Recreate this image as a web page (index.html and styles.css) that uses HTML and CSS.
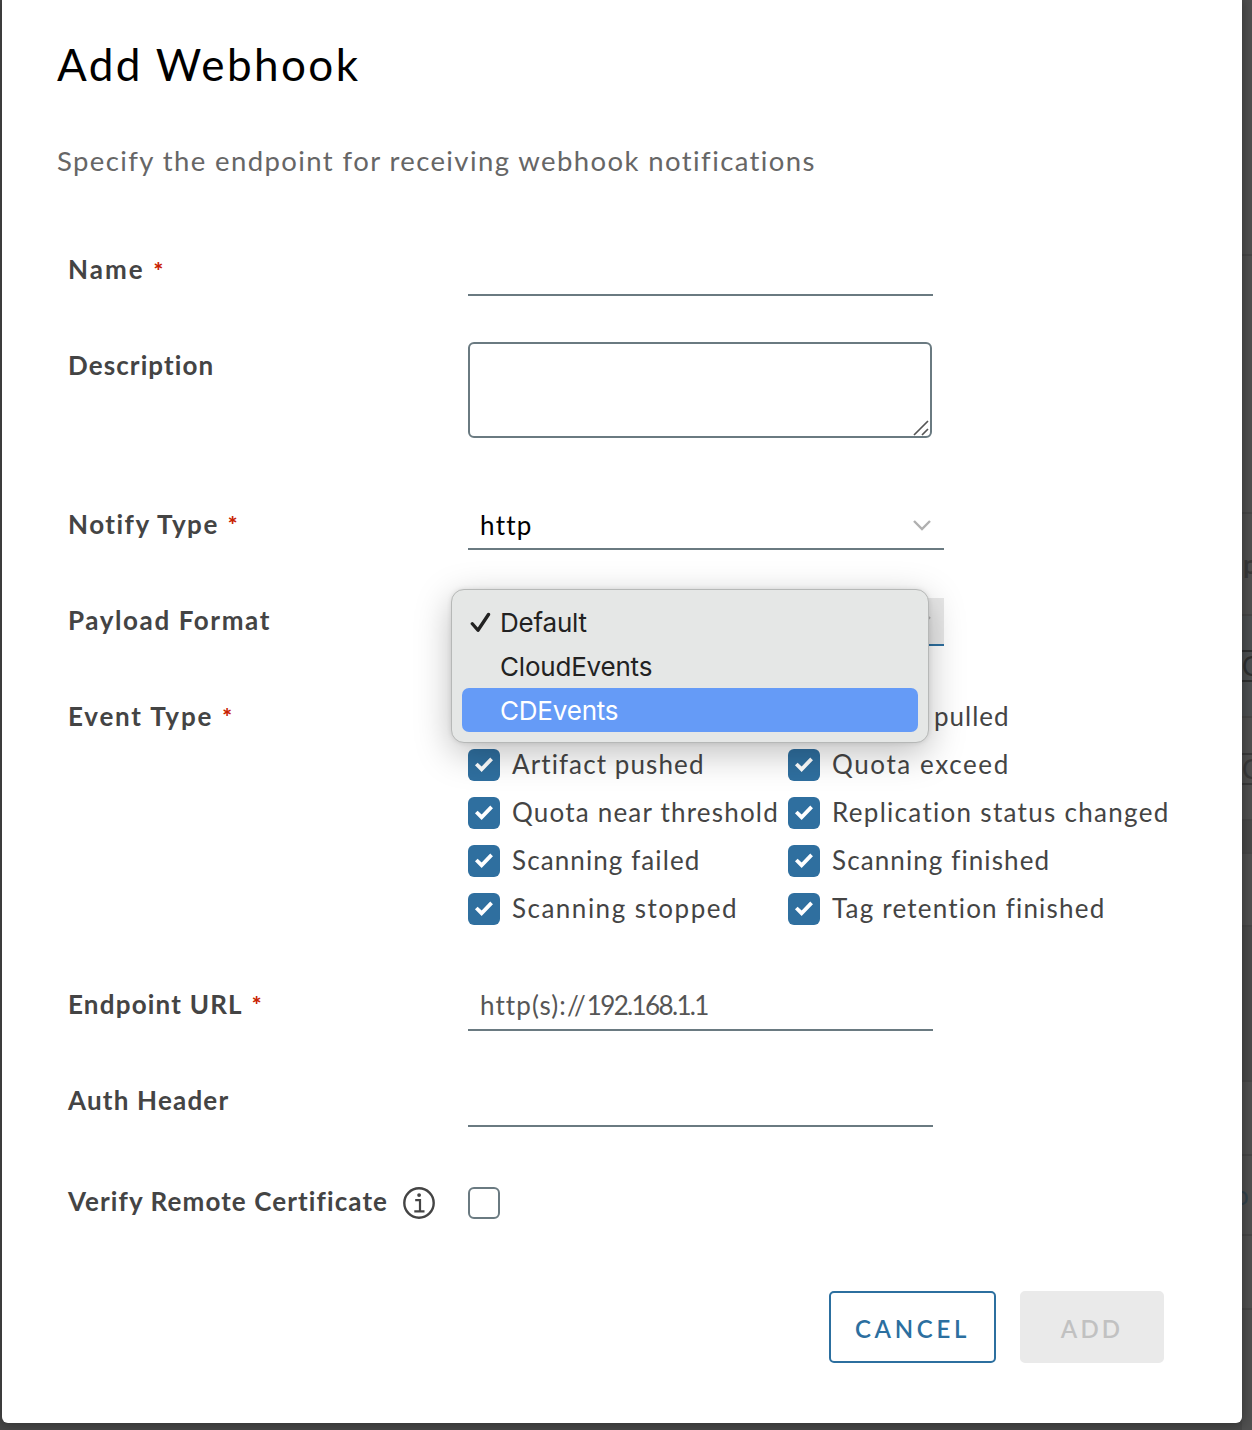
FILE: index.html
```html
<!DOCTYPE html>
<html lang="en">
<head>
<meta charset="utf-8">
<title>Add Webhook</title>
<link rel="stylesheet" href="styles.css">
</head>
<body>
<svg class="defs" aria-hidden="true">
  <symbol id="tick" viewBox="0 0 32 32"><path d="M8.3 15 13.6 20.2 23.6 9.9" fill="none" stroke="#fff" stroke-width="3.8"/></symbol>
  <symbol id="chevron" viewBox="0 0 20 12"><path d="M2 2 10 10 18 2" fill="none" stroke="#b0b0b0" stroke-width="2.4"/></symbol>
</svg>
<div class="backdrop">
  <main class="modal">
    <h1 class="title">Add Webhook</h1>
    <p class="subtitle">Specify the endpoint for receiving webhook notifications</p>
    <form class="form">
      <div class="row">
        <label class="label"><span class="track-20">Name</span><b class="req">*</b></label>
        <div class="field"></div>
      </div>
      <div class="row row-area">
        <label class="label"><span class="track-11">Description</span></label>
        <div class="area">
          <svg class="grip" viewBox="0 0 16 16"><path d="M1 15 15 1M9 15 15 9" stroke="#555" stroke-width="1.7" fill="none"/></svg>
        </div>
      </div>
      <div class="row">
        <label class="label mid"><span class="track-15">Notify Type</span><b class="req">*</b></label>
        <div class="field select"><span class="track-13">http</span><svg class="chev"><use href="#chevron"/></svg></div>
      </div>
      <div class="row">
        <label class="label mid"><span class="track-16">Payload Format</span></label>
        <div class="field select active">
          <svg class="chev"><use href="#chevron"/></svg>
          <div class="menu">
            <div class="option"><svg class="mark" viewBox="0 0 20 20"><path d="M2.2 11.2 7.6 17.4 17.6 2.4" fill="none" stroke="#222" stroke-width="3.2" stroke-linecap="round" stroke-linejoin="round"/></svg><span class="track-n">Default</span></div>
            <div class="option"><span class="track-n">CloudEvents</span></div>
            <div class="option chosen"><span class="track-n">CDEvents</span></div>
          </div>
        </div>
      </div>
      <div class="row row-events">
        <label class="label mid"><span class="track-18">Event Type</span><b class="req">*</b></label>
        <div class="events">
          <label class="check second"><svg class="box"><use href="#tick"/></svg><span class="track-10">Artifact pulled</span></label>
          <label class="check"><svg class="box"><use href="#tick"/></svg><span class="track-11">Artifact pushed</span></label>
          <label class="check"><svg class="box"><use href="#tick"/></svg><span class="track-16">Quota exceed</span></label>
          <label class="check"><svg class="box"><use href="#tick"/></svg><span class="track-12">Quota near threshold</span></label>
          <label class="check"><svg class="box"><use href="#tick"/></svg><span class="track-13">Replication status changed</span></label>
          <label class="check"><svg class="box"><use href="#tick"/></svg><span class="track-11">Scanning failed</span></label>
          <label class="check"><svg class="box"><use href="#tick"/></svg><span class="track-11">Scanning finished</span></label>
          <label class="check"><svg class="box"><use href="#tick"/></svg><span class="track-15">Scanning stopped</span></label>
          <label class="check"><svg class="box"><use href="#tick"/></svg><span class="track-12">Tag retention finished</span></label>
        </div>
      </div>
      <div class="row">
        <label class="label mid"><span class="track-12">Endpoint URL</span><b class="req">*</b></label>
        <div class="field tall hint"><span class="track-11">http(s)://</span><span class="digits">192.168.1.1</span></div>
      </div>
      <div class="row row-auth">
        <label class="label mid"><span class="track-12">Auth Header</span></label>
        <div class="field tall"></div>
      </div>
      <div class="row">
        <label class="label low"><span class="track-11">Verify Remote Certificate</span>
          <svg class="info" viewBox="0 0 32 32" fill="none" stroke="#444" stroke-width="2.4"><circle cx="16" cy="16" r="14.7"/><path d="M12.2 13.2H17V24M11.3 24.4H21.5" stroke-width="2.2"/><circle cx="16.1" cy="8.1" r="1.9" fill="#444" stroke="none"/></svg>
        </label>
        <div class="empty-box"></div>
      </div>
    </form>
    <div class="actions">
      <button class="btn cancel">CANCEL</button>
      <button class="btn add" disabled>ADD</button>
    </div>
  </main>
  <aside class="behind">
    <div class="strip h256"></div>
    <div class="strip h258"></div>
    <div class="strip h102"><span class="bold">p</span></div>
    <div class="strip h102 tint"><span class="boxed">C</span></div>
    <div class="strip h103"><span class="boxed faint">C</span></div>
    <div class="strip h33 band"></div>
    <div class="strip h73"></div>
    <div class="strip h155 deep"></div>
    <div class="strip h74"></div>
    <div class="strip h80"><span class="link">o</span></div>
    <div class="strip h74"></div>
  </aside>
</div>
</body>
</html>
```
FILE: styles.css
```css
* { box-sizing: border-box; }
body {
  margin: 0;
  background: #484848;
  font-family: Lato, "Open Sans", sans-serif;
  font-size: 26px;
  color: #444;
}
.defs { display: none; }
.backdrop {
  display: grid;
  grid-template-columns: 1240px 10px;
  height: 1430px;
  padding-left: 2px;
  overflow: hidden;
}
.modal {
  z-index: 1;
  height: 1423px;
  padding: 34px 0 0 55px;
  background: #fff;
  border-radius: 0 0 6px 6px;
  box-shadow: 0 0 12px 2px rgba(0, 0, 0, .3);
}
.title {
  margin: 0;
  font-size: 44px;
  font-weight: 400;
  line-height: 60px;
  letter-spacing: 2.4px;
  color: #000;
}
.subtitle {
  margin: 47px 0 0;
  font-size: 27.5px;
  line-height: 40px;
  letter-spacing: 1.4px;
  color: #666;
}
.form { padding: 67px 0 0 11px; }
.row { display: grid; grid-template-columns: 400px 1fr; height: 96px; align-items: start; }
.row-area { height: 158px; }
.row-events { height: 288px; }
.row-auth { height: 100px; }
.label { display: flex; align-items: center; height: 42px; font-weight: 700; line-height: 42px; white-space: nowrap; }
.mid { height: 43px; }
.low { height: 45px; }
.req { margin: 1px 0 0 9px; font-size: 23px; color: #c92100; }
.field {
  display: flex;
  align-items: center;
  width: 465px;
  height: 48px;
  padding-left: 12px;
  border-bottom: 2px solid #6a7a81;
}
.tall { height: 49px; padding-bottom: 2px; }
.select { position: relative; width: 476px; justify-content: space-between; color: #000; }
.active { justify-content: flex-end; background: #e8e8e8; border-color: #2d6f9f; }
.hint { color: #565656; }
.digits { letter-spacing: -1.65px; }
.chev { width: 20px; height: 12px; margin-right: 12px; }
.area {
  display: flex;
  justify-content: flex-end;
  align-items: flex-end;
  width: 464px;
  height: 96px;
  margin-top: -2px;
  padding: 0 1px;
  border: 2px solid #6a7a81;
  border-radius: 6px;
}
.grip { width: 16px; height: 16px; }

.menu {
  position: absolute;
  z-index: 2;
  left: -17px;
  top: -9px;
  width: 478px;
  height: 154px;
  padding: 10px;
  border: 1px solid #b6b8b7;
  border-radius: 13px;
  background: #e5e7e6;
  box-shadow: 0 10px 36px rgba(0, 0, 0, .26), 0 0 5px rgba(0, 0, 0, .1);
  font-family: Inter, "Liberation Sans", sans-serif;
  color: #222;
}
.option { display: grid; grid-template-columns: 30px 1fr; align-items: center; height: 44px; padding-left: 8px; border-radius: 7px; }
.option span { grid-column: 2; }
.option .mark { width: 21px; height: 21px; }
.chosen { background: #659bf7; color: #fff; }

.events { display: grid; grid-template-columns: 320px 1fr; grid-auto-rows: 48px; margin-top: -1px; }
.check { display: flex; gap: 12px; align-items: center; white-space: nowrap; }
.second { grid-column: 2; }
.box { flex: none; width: 32px; height: 32px; border-radius: 6px; background: #2f6f9f; }
.check span { height: 48px; line-height: 47px; }
.info { width: 32px; height: 32px; margin: 5px 0 0 15px; }
.empty-box { width: 32px; height: 32px; margin-top: 9px; border: 2px solid #6a7a81; border-radius: 6px; }

.actions { display: flex; justify-content: flex-end; gap: 24px; margin: 17px 78px 0 0; }
.btn {
  height: 72px;
  padding: 3px 0 0;
  border: 2px solid #2c6f9f;
  border-radius: 5px;
  background: #fff;
  font: 600 24px Lato, sans-serif;
  letter-spacing: 3.7px;
  color: #2c6f9f;
}
.cancel { width: 167px; }
.add { width: 144px; border-color: #eaeaea; background: #eaeaea; letter-spacing: 3.1px; color: #c1c1c1; }

.behind { overflow: hidden; height: 1430px; background: #505050; }
.strip { display: flex; align-items: center; border-bottom: 2px solid #474747; line-height: 28px; }
.tint { background: #4d5052; }
.band { background: #494949; }
.deep { background: #4b4b4b; }
.bold { margin-left: 1px; font-weight: 700; color: #393939; }
.boxed { width: 12px; border: solid #2f3030; border-width: 2px 0; color: #2f3030; }
.faint { border-color: #3a3a3a; color: #3a3a3a; }
.link { margin-left: -8px; color: #34434d; }
.h33 { height: 33px; }
.h73 { height: 73px; }
.h74 { height: 74px; }
.h80 { height: 80px; }
.h102 { height: 102px; }
.h103 { height: 103px; }
.h155 { height: 155px; }
.h256 { height: 256px; }
.h258 { height: 258px; }

.track-n { letter-spacing: -.2px; }
.track-10 { letter-spacing: 1px; }
.track-11 { letter-spacing: 1.1px; }
.track-12 { letter-spacing: 1.2px; }
.track-13 { letter-spacing: 1.3px; }
.track-15 { letter-spacing: 1.5px; }
.track-16 { letter-spacing: 1.6px; }
.track-18 { letter-spacing: 1.8px; }
.track-20 { letter-spacing: 2px; }
```
